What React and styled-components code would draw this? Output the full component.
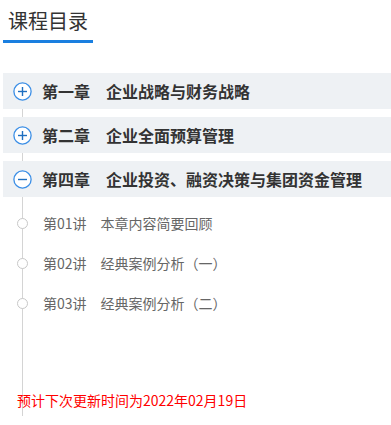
import styled, { createGlobalStyle } from "styled-components";

const GlobalStyle = createGlobalStyle`
  body {
    margin: 0;
    background: #fff;
    font-family: "Noto Sans CJK SC", "Noto Sans", sans-serif;
  }
`;

const Page = styled.div`
  width: 391px;
  height: 425px;
  overflow: hidden;
`;

const Tab = styled.div`
  width: 85px;
  margin-left: 3px;
  padding: 6px 0 0 5px;
  height: 34px;
  line-height: 30px;
  font-size: 20px;
  color: #333;
  border-bottom: 3px solid #1a7fe0;
`;

const Catalog = styled.div`
  position: relative;
  margin-top: 30px;
  padding-bottom: 6px;

  &::before {
    content: "";
    position: absolute;
    left: 22px;
    top: 18px;
    bottom: 0;
    width: 1px;
    background: #d4d4d4;
  }
`;

const Chapter = styled.div`
  position: relative;
  display: flex;
  align-items: center;
  gap: 10px;
  height: 36px;
  margin: 0 0 8px 3px;
  padding-left: 10px;
  background: #eef1f4;
  font-size: 16px;
  font-weight: bold;
  color: #333;
  white-space: nowrap;
`;

const Lessons = styled.div`
  padding-top: 6px;
  margin-top: -8px;
`;

const Lesson = styled.div`
  position: relative;
  display: flex;
  align-items: center;
  gap: 15px;
  height: 40px;
  padding-left: 17px;
  font-size: 14px;
  color: #666;
  white-space: nowrap;
`;

const Dot = styled.span`
  width: 9px;
  height: 9px;
  border: 1px solid #c8c8c8;
  border-radius: 50%;
  background: #fff;
`;

const Notice = styled.div`
  margin-top: 67px;
  padding-left: 17px;
  position: relative;
  font-size: 14px;
  line-height: 20px;
  color: #ff0000;
`;

const ToggleIcon = ({ open }) => (
  <svg width="19" height="19" viewBox="0 0 19 19">
    <circle cx="9.5" cy="9.5" r="8.6" fill="#fff" stroke="#3a8ee6" strokeWidth="1.3" />
    <line x1="5" y1="9.5" x2="14" y2="9.5" stroke="#1f6fc0" strokeWidth="1.4" />
    {!open && <line x1="9.5" y1="5" x2="9.5" y2="14" stroke="#1f6fc0" strokeWidth="1.4" />}
  </svg>
);

const chapters = [
  { title: "第一章　企业战略与财务战略" },
  { title: "第二章　企业全面预算管理" },
  {
    title: "第四章　企业投资、融资决策与集团资金管理",
    open: true,
    lessons: [
      "第01讲　本章内容简要回顾",
      "第02讲　经典案例分析（一）",
      "第03讲　经典案例分析（二）",
    ],
  },
];

export default function App() {
  return (
    <Page>
      <GlobalStyle />
      <Tab>课程目录</Tab>
      <Catalog>
        {chapters.map((c) => (
          <div key={c.title}>
            <Chapter>
              <ToggleIcon open={c.open} />
              <span>{c.title}</span>
            </Chapter>
            {c.lessons && (
              <Lessons>
                {c.lessons.map((l) => (
                  <Lesson key={l}>
                    <Dot />
                    <span>{l}</span>
                  </Lesson>
                ))}
              </Lessons>
            )}
          </div>
        ))}
        <Notice>预计下次更新时间为2022年02月19日</Notice>
      </Catalog>
    </Page>
  );
}
